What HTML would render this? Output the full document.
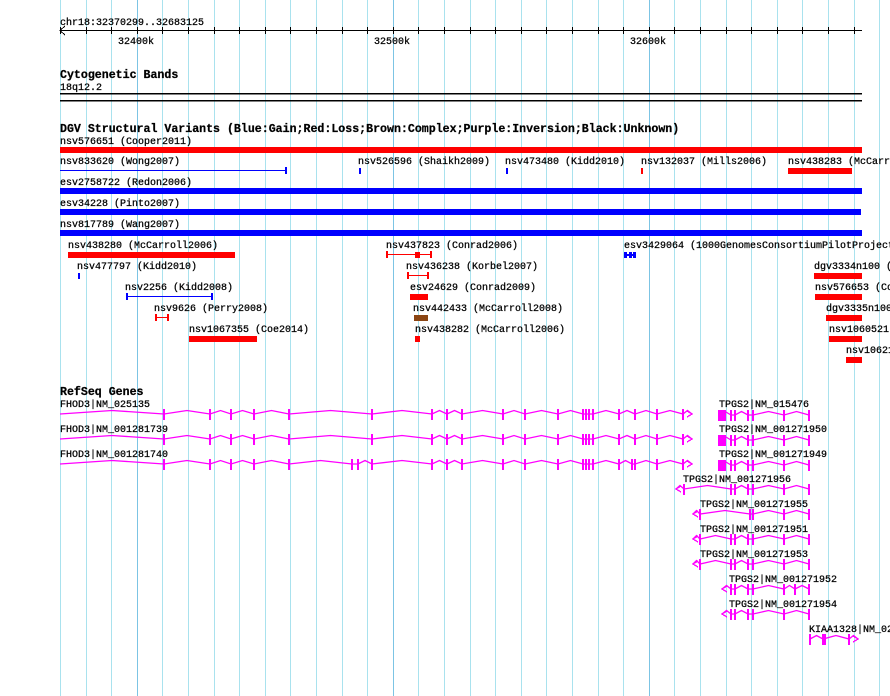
<!DOCTYPE html>
<html><head><meta charset="utf-8"><style>
html,body{margin:0;padding:0;background:#fff;}
svg{display:block;}
text{font-family:"Liberation Mono","DejaVu Sans Mono",monospace;font-size:10px;fill:#000;stroke:#000;stroke-width:0.25px;}
.b{font-weight:bold;font-size:11.6px;}
</style></head><body>
<svg id="s" width="890" height="696" xmlns="http://www.w3.org/2000/svg" shape-rendering="crispEdges">
<g id="grid"></g>
<text x="60" y="25">chr18:32370299..32683125</text>
<line x1="60" y1="30.5" x2="862" y2="30.5" stroke="#000"/>
<polyline points="65,26 60,30.5 65,35" fill="none" stroke="#000"/>
<g id="ticks"></g>
<text x="118" y="44">32400k</text>
<text x="374" y="44">32500k</text>
<text x="630" y="44">32600k</text>
<text class="b" x="60" y="78">Cytogenetic Bands</text>
<text x="60" y="90">18q12.2</text>
<rect x="60" y="93" width="802" height="1.5" fill="#000"/>
<rect x="60" y="100" width="802" height="1.5" fill="#000"/>
<text class="b" x="60" y="132">DGV Structural Variants (Blue:Gain;Red:Loss;Brown:Complex;Purple:Inversion;Black:Unknown)</text>
<text x="60" y="144">nsv576651 (Cooper2011)</text>
<rect x="60" y="147" width="802" height="6" fill="#f00"/>
<text x="60" y="164">nsv833620 (Wong2007)</text>
<rect x="60" y="170" width="226" height="1" fill="#00f"/><rect x="285" y="167" width="2" height="7" fill="#00f"/>
<text x="358" y="164">nsv526596 (Shaikh2009)</text><rect x="359" y="168" width="2" height="6" fill="#00f"/>
<text x="505" y="164">nsv473480 (Kidd2010)</text><rect x="506" y="168" width="2" height="6" fill="#00f"/>
<text x="641" y="164">nsv132037 (Mills2006)</text><rect x="641" y="168" width="2" height="6" fill="#f00"/>
<text x="788" y="164">nsv438283 (McCarroll2006)</text><rect x="788" y="168" width="64" height="6" fill="#f00"/>
<text x="60" y="185">esv2758722 (Redon2006)</text><rect x="60" y="188" width="802" height="6" fill="#00f"/>
<text x="60" y="206">esv34228 (Pinto2007)</text><rect x="60" y="209" width="801" height="6" fill="#00f"/>
<text x="60" y="227">nsv817789 (Wang2007)</text><rect x="60" y="230" width="802" height="6" fill="#00f"/>

<text x="68" y="248">nsv438280 (McCarroll2006)</text><rect x="68" y="252" width="167" height="6" fill="#f00"/>
<text x="386" y="248">nsv437823 (Conrad2006)</text>
<rect x="386" y="254" width="46" height="1" fill="#f00"/><rect x="386" y="251" width="2" height="7" fill="#f00"/><rect x="430" y="251" width="2" height="7" fill="#f00"/><rect x="415" y="252" width="5" height="6" fill="#f00"/>
<text x="624" y="248">esv3429064 (1000GenomesConsortiumPilotProject)</text>
<rect x="624" y="252" width="12" height="6" fill="#00f"/><rect x="627" y="252" width="2" height="2" fill="#fff"/><rect x="627" y="256" width="2" height="2" fill="#fff"/><rect x="632" y="252" width="1" height="2" fill="#fff"/><rect x="632" y="256" width="1" height="2" fill="#fff"/>

<text x="77" y="269">nsv477797 (Kidd2010)</text><rect x="78" y="273" width="2" height="6" fill="#00f"/>
<text x="406" y="269">nsv436238 (Korbel2007)</text>
<rect x="408" y="275" width="20" height="1" fill="#f00"/><rect x="407" y="272" width="2" height="7" fill="#f00"/><rect x="427" y="272" width="2" height="7" fill="#f00"/>
<text x="814" y="269">dgv3334n100 (Coe2014)</text><rect x="814" y="273" width="48" height="6" fill="#f00"/>

<text x="125" y="290">nsv2256 (Kidd2008)</text>
<rect x="127" y="296" width="85" height="1" fill="#00f"/><rect x="126" y="293" width="2" height="7" fill="#00f"/><rect x="211" y="293" width="2" height="7" fill="#00f"/>
<text x="410" y="290">esv24629 (Conrad2009)</text><rect x="410" y="294" width="18" height="6" fill="#f00"/>
<text x="815" y="290">nsv576653 (Cooper2011)</text><rect x="815" y="294" width="47" height="6" fill="#f00"/>

<text x="154" y="311">nsv9626 (Perry2008)</text>
<rect x="155" y="317" width="13" height="1" fill="#f00"/><rect x="155" y="314" width="2" height="7" fill="#f00"/><rect x="167" y="314" width="2" height="7" fill="#f00"/>
<text x="413" y="311">nsv442433 (McCarroll2008)</text><rect x="414" y="315" width="14" height="6" fill="#8b4513"/>
<text x="826" y="311">dgv3335n100 (Coe2014)</text><rect x="826" y="315" width="36" height="6" fill="#f00"/>

<text x="189" y="332">nsv1067355 (Coe2014)</text><rect x="189" y="336" width="68" height="6" fill="#f00"/>
<text x="415" y="332">nsv438282 (McCarroll2006)</text><rect x="415" y="336" width="5" height="6" fill="#f00"/>
<text x="829" y="332">nsv1060521 (Coe2014)</text><rect x="829" y="336" width="33" height="6" fill="#f00"/>
<text x="846" y="353">nsv1062139</text><rect x="846" y="357" width="16" height="6" fill="#f00"/>

<text class="b" x="60" y="395">RefSeq Genes</text>
<text x="60" y="407">FHOD3|NM_025135</text>
<text x="60" y="432">FHOD3|NM_001281739</text>
<text x="60" y="457">FHOD3|NM_001281740</text>
<text x="719" y="407">TPGS2|NM_015476</text>
<text x="719" y="432">TPGS2|NM_001271950</text>
<text x="719" y="457">TPGS2|NM_001271949</text>
<text x="683" y="482">TPGS2|NM_001271956</text>
<text x="700" y="507">TPGS2|NM_001271955</text>
<text x="700" y="532">TPGS2|NM_001271951</text>
<text x="700" y="557">TPGS2|NM_001271953</text>
<text x="729" y="582">TPGS2|NM_001271952</text>
<text x="729" y="607">TPGS2|NM_001271954</text>
<text x="809" y="632">KIAA1328|NM_020776</text>
<g id="genes"></g>
</svg>
<script>
var NS="http://www.w3.org/2000/svg";
function el(p,t,a){var e=document.createElementNS(NS,t);for(var k in a)e.setAttribute(k,a[k]);p.appendChild(e);return e;}
var g=document.getElementById("grid"),tk=document.getElementById("ticks");
for(var i=0;i<=32;i++){var x=Math.round(60+25.6*i)+0.5;var dark=(i==3||i==13||i==23);
el(g,"line",{x1:x,y1:0,x2:x,y2:696,stroke:dark?"#7cc4e4":"#a9e2ee"});
if(x<863)el(tk,"line",{x1:x,y1:27,x2:x,y2:34,stroke:"#000"});}
var G=document.getElementById("genes"),M="#f0f";
function gene(y,start,end,ex,opts){opts=opts||{};
 var pts=[];var xs=[start].concat(ex.map(function(e){return e[0]})).concat([end]);
 for(var i=0;i<xs.length-1;i++){var a=xs[i],b=xs[i+1];pts.push(a+","+y);if(b-a>6)pts.push(((a+b)/2)+","+(y-3.5));}
 pts.push(end+","+y);
 el(G,"polyline",{points:pts.join(" "),fill:"none",stroke:M,"stroke-width":1.3,"shape-rendering":"auto"});
 ex.forEach(function(e){var w=e[1]||2;el(G,"rect",{x:e[0]-1,y:y-5,width:w,height:11,fill:M});});
 if(opts.r){el(G,"polyline",{points:(end-5)+","+(y-3)+" "+end+","+y+" "+(end-5)+","+(y+3),fill:"none",stroke:M,"stroke-width":1.3});}
 if(opts.l){el(G,"polyline",{points:(start+5)+","+(y-3)+" "+start+","+y+" "+(start+5)+","+(y+3),fill:"none",stroke:M,"stroke-width":1.3});}
}
function E(a){return a.map(function(x){return Array.isArray(x)?x:[x]});}
var f1=[164,210,231,254,289,372,432,447,462,503,525,558,583,586,589,593,619,635,657,683];
gene(414,60,692,E(f1),{r:1});
gene(439,60,692,E(f1),{r:1});
var f3=[164,210,231,254,289,352,358,372,432,447,462,503,525,558,583,586,589,593,619,632,635,657,683];
gene(464,60,692,E(f3),{r:1});
var t1=[[719,8],731,735,748,753,784,809];
gene(415,719,809,E(t1));gene(440,719,809,E(t1));gene(465,719,809,E(t1));
gene(489,676,809,E([684,731,735,748,753,784,809]),{l:1});
gene(514,693,809,E([700,750,753,784,809]),{l:1});
gene(539,693,809,E([700,731,735,748,753,784,809]),{l:1});
gene(564,693,809,E([700,731,735,748,753,784,809]),{l:1});
gene(589,722,809,E([731,735,748,753,784,795,809]),{l:1});
gene(614,722,809,E([731,735,748,753,784,809]),{l:1});
gene(639,810,858,E([810,[823,4],849]),{r:1});
</script>
</body></html>
